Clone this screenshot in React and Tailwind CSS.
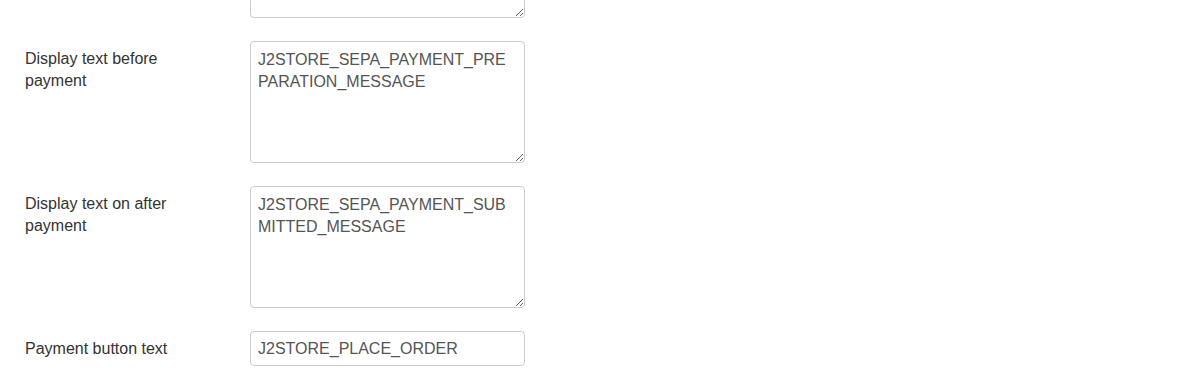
export default function App() {
  const ta =
    "block w-[275px] h-[122px] border border-[#cccccc] rounded-[4px] pl-[7px] pr-[12px] pt-[7px] pb-[5px] text-[16px] leading-[22px] text-[#555555] bg-white resize outline-none";
  const Row = ({ label, children }) => (
    <div className="flex items-start">
      <label className="w-[250px] shrink-0 pl-[25px] pt-[7px] text-[16px] leading-[22px] text-[#333333]">
        <span className="block w-[180px]">{label}</span>
      </label>
      <div>{children}</div>
    </div>
  );
  return (
    <div className="w-[1189px] h-[389px] overflow-hidden bg-white font-['Liberation_Sans',Arial,sans-serif]">
      <div className="flex flex-col gap-[23px] -mt-[104px]">
        <Row label="">
          <textarea readOnly className={ta} defaultValue="" />
        </Row>
        <Row label="Display text before payment">
          <textarea
            readOnly
            className={ta}
            defaultValue="J2STORE_SEPA_PAYMENT_PREPARATION_MESSAGE"
          />
        </Row>
        <Row label="Display text on after payment">
          <textarea
            readOnly
            className={ta}
            defaultValue="J2STORE_SEPA_PAYMENT_SUBMITTED_MESSAGE"
          />
        </Row>
        <Row label="Payment button text">
          <input
            readOnly
            type="text"
            className="block w-[275px] h-[35px] border border-[#cccccc] rounded-[4px] px-[7px] text-[16px] text-[#555555] bg-white outline-none"
            defaultValue="J2STORE_PLACE_ORDER"
          />
        </Row>
      </div>
    </div>
  );
}
